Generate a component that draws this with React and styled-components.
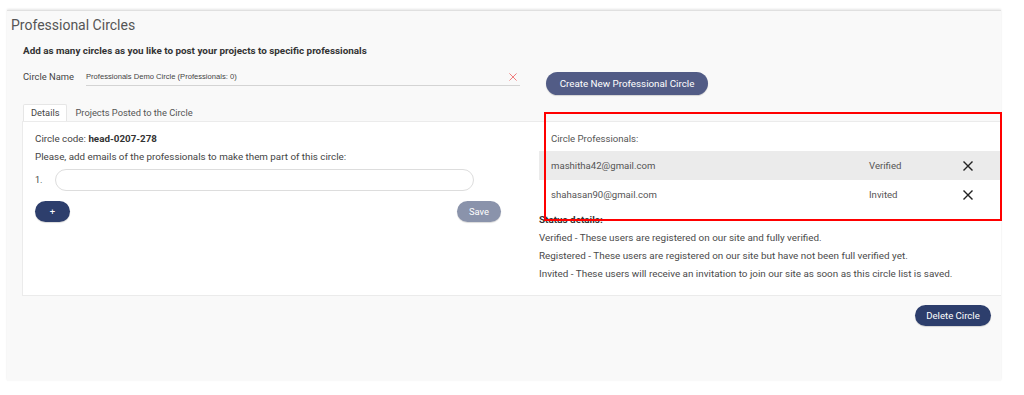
import React from "react";
import styled, { createGlobalStyle } from "styled-components";

const Global = createGlobalStyle`
  html, body { margin: 0; padding: 0; background: #ffffff; }
  body { font-family: Roboto, "Liberation Sans", Arial, sans-serif; color: #444; }
  * { box-sizing: border-box; }
`;

const Page = styled.div`
  padding: 10px 23px 14px 7px;
`;

const Panel = styled.section`
  width: 994px;
  height: 371px;
  background: #f9f9f9;
  border-top: 1px solid #e0e0e0;
  box-shadow: 0 -1px 2px rgba(0, 0, 0, 0.1);
  display: flex;
  flex-direction: column;
`;

const Title = styled.h1`
  margin: 6px 0 0 4px;
  font-size: 14px;
  line-height: 17px;
  font-weight: 400;
  color: #555;
`;

const Subtitle = styled.h2`
  margin: 10px 0 0 16px;
  font-size: 9.9px;
  line-height: 13px;
  font-weight: 700;
  color: #333;
`;

const NameRow = styled.div`
  display: flex;
  align-items: flex-start;
  margin: 13px 0 0 16px;
`;

const Field = styled.div`
  display: flex;
  align-items: flex-start;
`;

const FieldLabel = styled.label`
  width: 63px;
  font-size: 9.4px;
  line-height: 14px;
  color: #444;
`;

const NameInput = styled.div`
  width: 434px;
  height: 16px;
  border-bottom: 1px solid #d4d4d4;
  display: flex;
  align-items: flex-start;
  justify-content: space-between;
  padding-right: 3px;
`;

const NameValue = styled.span`
  font-family: "Liberation Sans", Arial, sans-serif;
  font-size: 7.6px;
  line-height: 14px;
  color: #444;
`;

const ClearIcon = styled.svg`
  margin-top: 3px;
  width: 8px;
  height: 8px;
`;

const PillButton = styled.button`
  border: none;
  border-radius: 12px;
  font-family: Roboto, "Liberation Sans", Arial, sans-serif;
  font-weight: 400;
  font-size: ${(p) => p.$size || "9.4px"};
  color: #ffffff;
  background: ${(p) => p.$bg};
  height: ${(p) => p.$h || "21px"};
  width: ${(p) => p.$w};
  padding: 0;
  cursor: pointer;
  box-shadow: 0 1px 1px rgba(0, 0, 0, 0.15);
`;

const CreateButton = styled(PillButton)`
  margin: 2px 0 0 26px;
`;

const Tabs = styled.div`
  display: flex;
  margin: 9px 0 0 16px;
  height: 17px;
`;

const Tab = styled.div`
  padding: 0 7px;
  font-size: 9.3px;
  line-height: 16px;
  color: ${(p) => (p.$active ? "#444" : "#555")};
  background: ${(p) => (p.$active ? "#ffffff" : "transparent")};
  border: 1px solid ${(p) => (p.$active ? "#e6e6e6" : "transparent")};
  border-bottom: none;
  border-radius: 2px 2px 0 0;
  position: relative;
  z-index: 1;
`;

const Card = styled.div`
  margin-left: 15px;
  height: 175px;
  background: #ffffff;
  border: 1px solid #ebebeb;
  border-right: none;
  display: grid;
  grid-template-columns: 516px 1fr;
`;

const LeftCol = styled.div`
  padding: 10px 38px 0 12px;
  display: flex;
  flex-direction: column;
`;

const Line = styled.p`
  margin: ${(p) => p.$mt || "0"} 0 0 0;
  font-size: 9.8px;
  line-height: 14px;
  color: #444;
  strong { font-weight: 700; color: #333; }
`;

const EmailRow = styled.div`
  display: flex;
  align-items: center;
  margin-top: 5px;
`;

const Index = styled.span`
  width: 20px;
  font-size: 9px;
  color: #444;
`;

const EmailInput = styled.input`
  width: 419px;
  height: 22px;
  border: 1px solid #dddddd;
  border-radius: 11px;
  background: #ffffff;
  outline: none;
`;

const ButtonsRow = styled.div`
  display: flex;
  justify-content: space-between;
  margin-top: 10px;
`;

const RightCol = styled.div`
  position: relative;
  padding-top: 10px;
  display: flex;
  flex-direction: column;
`;

const SectionLabel = styled.p`
  margin: 0;
  padding-left: 12px;
  font-size: 9.6px;
  line-height: 14px;
  color: #555;
`;

const Rows = styled.div`
  margin-top: 5px;
`;

const ProRow = styled.div`
  display: grid;
  grid-template-columns: 318px 94px 10px;
  align-items: center;
  height: 29px;
  padding-left: 12px;
  background: ${(p) => (p.$shaded ? "#ebebeb" : "transparent")};
  font-size: 9.6px;
  color: #555;
`;

const RemoveIcon = styled.svg`
  width: 10px;
  height: 10px;
`;

const StatusBlock = styled.div`
  margin-top: 2px;
`;

const StatusLine = styled.p`
  margin: 0;
  font-size: 9.9px;
  line-height: 18px;
  color: ${(p) => (p.$bold ? "#333" : "#4a4a4a")};
  font-weight: ${(p) => (p.$bold ? 700 : 400)};
`;

const Highlight = styled.div`
  position: absolute;
  left: 5px;
  top: -10px;
  right: -1px;
  height: 109px;
  border: 2px solid #ff0000;
  pointer-events: none;
`;

const Footer = styled.div`
  display: flex;
  justify-content: flex-end;
  margin: 9px 10px 0 0;
`;

const Cross = ({ color = "#222", as: C = RemoveIcon, sw = 1.4 }) => (
  <C viewBox="0 0 10 10">
    <path d="M1 1 L9 9 M9 1 L1 9" stroke={color} strokeWidth={sw} fill="none" strokeLinecap="square" />
  </C>
);

const pros = [
  { email: "mashitha42@gmail.com", status: "Verified" },
  { email: "shahasan90@gmail.com", status: "Invited" },
];

export default function App() {
  return (
    <>
      <Global />
      <Page>
        <Panel>
          <Title>Professional Circles</Title>
          <Subtitle>Add as many circles as you like to post your projects to specific professionals</Subtitle>
          <NameRow>
            <Field>
              <FieldLabel>Circle Name</FieldLabel>
              <NameInput>
                <NameValue>Professionals Demo Circle (Professionals: 0)</NameValue>
                <Cross as={ClearIcon} color="#ee6b6b" sw={1.1} />
              </NameInput>
            </Field>
            <CreateButton $bg="#525c86" $w="162px" $h="23px" $size="9.8px">
              Create New Professional Circle
            </CreateButton>
          </NameRow>
          <Tabs>
            <Tab $active>Details</Tab>
            <Tab>Projects Posted to the Circle</Tab>
          </Tabs>
          <Card>
            <LeftCol>
              <Line>
                Circle code: <strong>head-0207-278</strong>
              </Line>
              <Line $mt="4px">Please, add emails of the professionals to make them part of this circle:</Line>
              <EmailRow>
                <Index>1.</Index>
                <EmailInput type="text" />
              </EmailRow>
              <ButtonsRow>
                <PillButton $bg="#2d3e6c" $w="35px">+</PillButton>
                <PillButton $bg="#8a93ab" $w="44px">Save</PillButton>
              </ButtonsRow>
            </LeftCol>
            <RightCol>
              <SectionLabel>Circle Professionals:</SectionLabel>
              <Rows>
                {pros.map((p, i) => (
                  <ProRow key={p.email} $shaded={i === 0}>
                    <span>{p.email}</span>
                    <span>{p.status}</span>
                    <Cross />
                  </ProRow>
                ))}
              </Rows>
              <StatusBlock>
                <StatusLine $bold>Status details:</StatusLine>
                <StatusLine>Verified - These users are registered on our site and fully verified.</StatusLine>
                <StatusLine>Registered - These users are registered on our site but have not been full verified yet.</StatusLine>
                <StatusLine>Invited - These users will receive an invitation to join our site as soon as this circle list is saved.</StatusLine>
              </StatusBlock>
              <Highlight />
            </RightCol>
          </Card>
          <Footer>
            <PillButton $bg="#2d3e6c" $w="76px" $size="9.6px">Delete Circle</PillButton>
          </Footer>
        </Panel>
      </Page>
    </>
  );
}
